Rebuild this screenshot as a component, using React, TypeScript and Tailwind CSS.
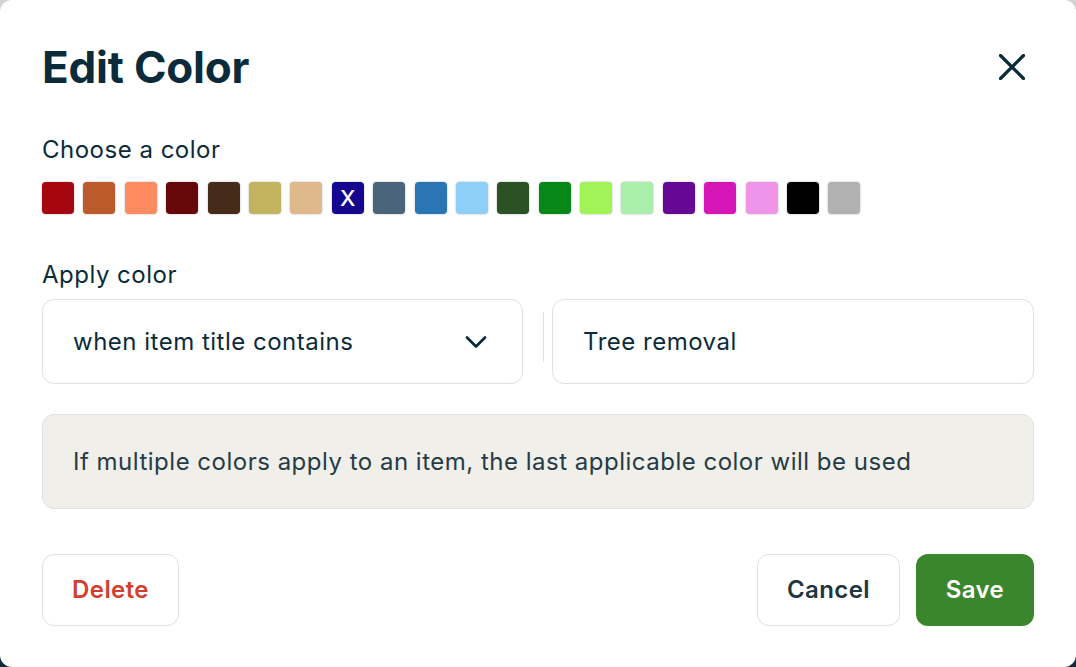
import React, { useState } from 'react';
import { ChevronDown } from 'lucide-react';

const colors = [
  '#a6060f',
  '#bb5a2b',
  '#ff8c61',
  '#66070a',
  '#462a1a',
  '#c2b45f',
  '#dfb98b',
  '#14068f',
  '#4a657b',
  '#2a75b4',
  '#8ecff8',
  '#2c5125',
  '#068818',
  '#a2f358',
  '#abefad',
  '#660896',
  '#d616b6',
  '#ee95e9',
  '#000000',
  '#b1b1b1',
];

const App: React.FC = () => {
  const [selected, setSelected] = useState(7);

  return (
    <div className="h-screen w-full bg-linear-to-b from-[#d4d4d4] to-[#0b2b3b] font-['Inter',sans-serif] text-[#0b2b3b]">
      <div className="flex h-full w-full flex-col rounded-[12px] bg-white px-[42px]">
        {/* header */}
        <div className="flex items-center justify-between pt-[38px]">
          <h1 className="text-[44px] font-bold leading-[58px] tracking-[-0.2px]">Edit Color</h1>
          <button className="mr-[9px] text-[#0b2b3b]">
            <svg width="26" height="26" viewBox="0 0 26 26" fill="none" stroke="currentColor" strokeWidth="3.2" strokeLinecap="round">
              <path d="M1.5 1.5l23 23M24.5 1.5l-23 23" />
            </svg>
          </button>
        </div>

        <div className="mt-[38px] text-[24px] leading-[32px] tracking-[0.5px]">Choose a color</div>
        <div className="mt-[16px] flex gap-[9.4px]">
          {colors.map((c, i) => (
            <button
              key={c}
              onClick={() => setSelected(i)}
              className="flex h-8 w-8 items-center justify-center rounded-[4px] shadow-[0_0_2px_rgba(0,0,0,0.35)]"
              style={{ backgroundColor: c }}
            >
              {selected === i && (
                <span className="text-[22px] font-medium leading-none text-white">X</span>
              )}
            </button>
          ))}
        </div>

        <div className="mt-[45px] text-[24px] leading-[32px] tracking-[0.5px]">Apply color</div>
        <div className="mt-[8px] flex items-center">
          <div className="flex h-[85px] w-[481px] items-center justify-between rounded-[12px] border border-[#dde2e5] pl-[30px] pr-[37px]">
            <span className="text-[24px] tracking-[0.5px]">when item title contains</span>
            <ChevronDown size={36} strokeWidth={1.8} className="-mr-[9px]" />
          </div>
          <div className="ml-[20px] mr-[8px] mb-[10px] h-[50px] w-px bg-[#dde2e5]" />
          <div className="flex h-[85px] flex-1 items-center rounded-[12px] border border-[#dde2e5] pl-[30px]">
            <span className="text-[24px] tracking-[0.5px]">Tree removal</span>
          </div>
        </div>

        <div className="mt-[30px] flex h-[95px] items-center rounded-[12px] border border-[#dde2e5] bg-[#f0efea] pl-[30px] text-[24px] tracking-[0.5px] text-[#263b46]">
          If multiple colors apply to an item, the last applicable color will be used
        </div>

        <div className="mt-[45px] flex items-center justify-between">
          <button className="h-[72px] w-[137px] rounded-[12px] border border-[#dde2e5] bg-white text-[24px] font-semibold tracking-[0.4px] text-[#d23f2e]">
            Delete
          </button>
          <div className="flex gap-[16px]">
            <button className="h-[72px] w-[143px] rounded-[12px] border border-[#dde2e5] bg-white text-[24px] font-semibold tracking-[0.4px] text-[#1f3541]">
              Cancel
            </button>
            <button className="h-[72px] w-[118px] rounded-[12px] bg-[#3a862c] text-[24px] font-semibold tracking-[0.4px] text-white">
              Save
            </button>
          </div>
        </div>
      </div>
    </div>
  );
};

export default App;
